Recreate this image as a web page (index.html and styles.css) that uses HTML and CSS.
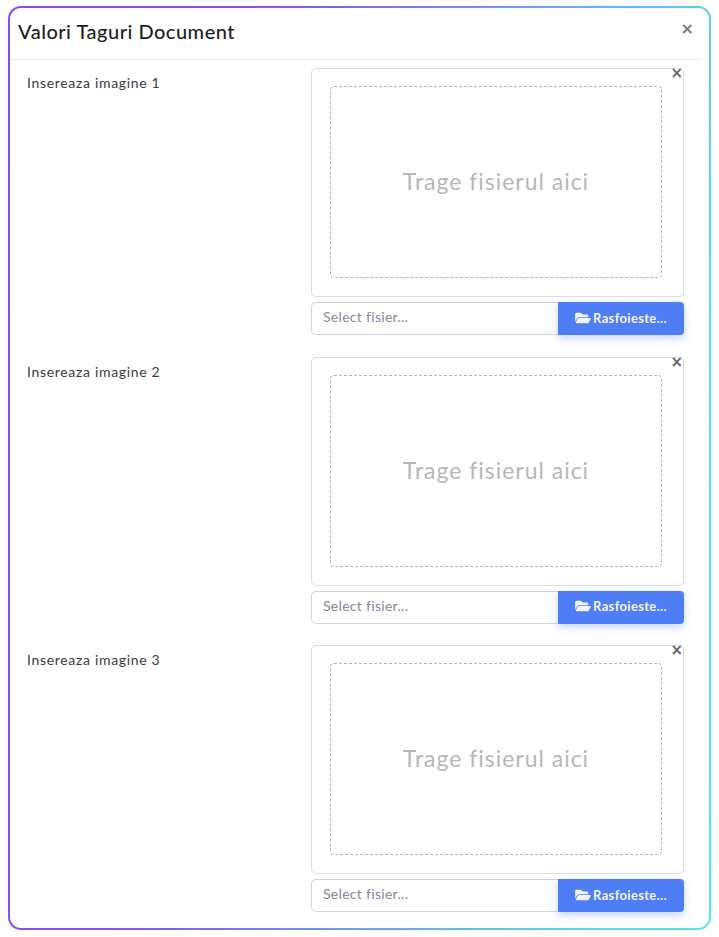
FILE: index.html
```html
<!DOCTYPE html>
<html lang="ro">
<head>
<meta charset="utf-8">
<title>Valori Taguri Document</title>
<link rel="stylesheet" href="styles.css">
</head>
<body>
<div class="modal">
  <header class="modal-header">
    <h1 class="modal-title">Valori Taguri Document</h1>
    <span class="close-main">×</span>
  </header>
  <main class="modal-body">
    <section class="row">
      <label class="row-label">Insereaza imagine 1</label>
      <div class="field">
        <div class="preview">
          <span class="close-preview">×</span>
          <div class="drop"><span class="drop-text">Trage fisierul aici</span></div>
        </div>
        <div class="picker">
          <div class="picker-input">Select fisier...</div>
          <div class="picker-btn">
            <svg class="folder" viewBox="0 0 576 512"><path fill="currentColor" d="M572.7 292.1l-72.4 124.1A64 64 0 0 1 445 448H45c-18.500 0-30.100-20.100-20.700-36.100l72.400-124.100A64 64 0 0 1 152 256h400c18.500 0 30.100 20.100 20.700 36.100zM152 224h328v-48c0-26.500-21.500-48-48-48H272l-64-64H48C21.500 64 0 85.500 0 112v278l69.100-118.400C86.200 242.300 118 224 152 224z"/></svg>
            <span>Rasfoieste...</span>
          </div>
        </div>
      </div>
    </section>
    <section class="row">
      <label class="row-label">Insereaza imagine 2</label>
      <div class="field">
        <div class="preview">
          <span class="close-preview">×</span>
          <div class="drop"><span class="drop-text">Trage fisierul aici</span></div>
        </div>
        <div class="picker">
          <div class="picker-input">Select fisier...</div>
          <div class="picker-btn">
            <svg class="folder" viewBox="0 0 576 512"><path fill="currentColor" d="M572.7 292.1l-72.4 124.1A64 64 0 0 1 445 448H45c-18.500 0-30.100-20.100-20.700-36.100l72.400-124.100A64 64 0 0 1 152 256h400c18.500 0 30.100 20.100 20.700 36.100zM152 224h328v-48c0-26.500-21.500-48-48-48H272l-64-64H48C21.500 64 0 85.500 0 112v278l69.100-118.400C86.200 242.300 118 224 152 224z"/></svg>
            <span>Rasfoieste...</span>
          </div>
        </div>
      </div>
    </section>
    <section class="row">
      <label class="row-label">Insereaza imagine 3</label>
      <div class="field">
        <div class="preview">
          <span class="close-preview">×</span>
          <div class="drop"><span class="drop-text">Trage fisierul aici</span></div>
        </div>
        <div class="picker">
          <div class="picker-input">Select fisier...</div>
          <div class="picker-btn">
            <svg class="folder" viewBox="0 0 576 512"><path fill="currentColor" d="M572.7 292.1l-72.4 124.1A64 64 0 0 1 445 448H45c-18.500 0-30.100-20.100-20.700-36.100l72.400-124.100A64 64 0 0 1 152 256h400c18.500 0 30.100 20.100 20.700 36.100zM152 224h328v-48c0-26.500-21.500-48-48-48H272l-64-64H48C21.500 64 0 85.500 0 112v278l69.100-118.400C86.200 242.300 118 224 152 224z"/></svg>
            <span>Rasfoieste...</span>
          </div>
        </div>
      </div>
    </section>
  </main>
</div>
</body>
</html>
```
FILE: styles.css
```css
* { box-sizing: border-box; }
html, body { margin: 0; padding: 0; background: #fff; }
body {
  font-family: "Lato", "Open Sans", sans-serif;
  color: #3a3b45;
  width: 719px;
  height: 937px;
  overflow: hidden;
  padding: 6px 8px 7px 8px;
}
.modal {
  height: 924px;
  width: 703px;
  border: 2px solid transparent;
  border-radius: 13px;
  background:
    linear-gradient(#fff, #fff) padding-box,
    linear-gradient(100deg, #8a45f7 0%, #8458f6 35%, #6f9ff8 60%, #5ad6ef 85%, #55e6ea 100%) border-box;
  display: flex;
  flex-direction: column;
}
.modal-header {
  flex: none;
  height: 52px;
  margin-right: 7px;
  padding: 0 8px;
  border-bottom: 1px solid #e9ecef;
  display: flex;
  align-items: center;
  justify-content: space-between;
}
.modal-title {
  margin: 0;
  font-size: 20px;
  font-weight: 500;
  letter-spacing: 0.5px;
  color: #1d1d1f;
  position: relative;
  top: -3px;
}
.close-main {
  font-family: "DejaVu Sans", sans-serif;
  font-weight: 700;
  font-size: 16px;
  line-height: 1;
  color: #777;
  position: relative;
  top: -5px;
}
.modal-body {
  padding: 8px 25px 0 17px;
  display: flex;
  flex-direction: column;
}
.row {
  display: grid;
  grid-template-columns: 284px 373px;
  margin-bottom: 21.5px;
}
.row:last-child { margin-bottom: 0; }
.row-label {
  font-size: 14px;
  letter-spacing: 0.68px;
  color: #3a3b45;
  padding-top: 6px;
  line-height: 18px;
}
.field {
  display: flex;
  flex-direction: column;
  gap: 5px;
}
.preview {
  position: relative;
  height: 229px;
  border: 1px solid #ddd;
  border-radius: 5px;
  padding: 17px 21px 18px 18px;
  display: flex;
}
.close-preview {
  position: absolute;
  top: -3px;
  right: 0;
  font-family: "DejaVu Sans", sans-serif;
  font-weight: 700;
  font-size: 15px;
  line-height: 15px;
  color: #666;
}
.drop {
  flex: 1;
  border: 1px dashed #b5b5b5;
  border-radius: 4px;
  display: flex;
  align-items: center;
  justify-content: center;
}
.drop-text {
  font-size: 23px;
  letter-spacing: 0.98px;
  color: #b7b7b7;
  position: relative;
  top: -1px;
}
.picker {
  display: flex;
  height: 33px;
}
.picker-input {
  flex: 1;
  border: 1px solid #d1d3e2;
  border-right: 0;
  border-radius: 5px 0 0 5px;
  padding: 0 11px;
  font-size: 14px;
  letter-spacing: 0.3px;
  line-height: 28px;
  color: #858796;
}
.picker-btn {
  width: 126px;
  padding-bottom: 2px;
  background: #4e7df6;
  color: #f2f5ff;
  border-radius: 0 4px 4px 0;
  box-shadow: 0 3px 8px rgba(78, 125, 246, 0.35);
  display: flex;
  align-items: center;
  justify-content: center;
  gap: 2px;
  font-size: 13px;
  font-weight: 700;
  letter-spacing: 0.33px;
}
.folder { width: 16px; height: 14px; }
```
